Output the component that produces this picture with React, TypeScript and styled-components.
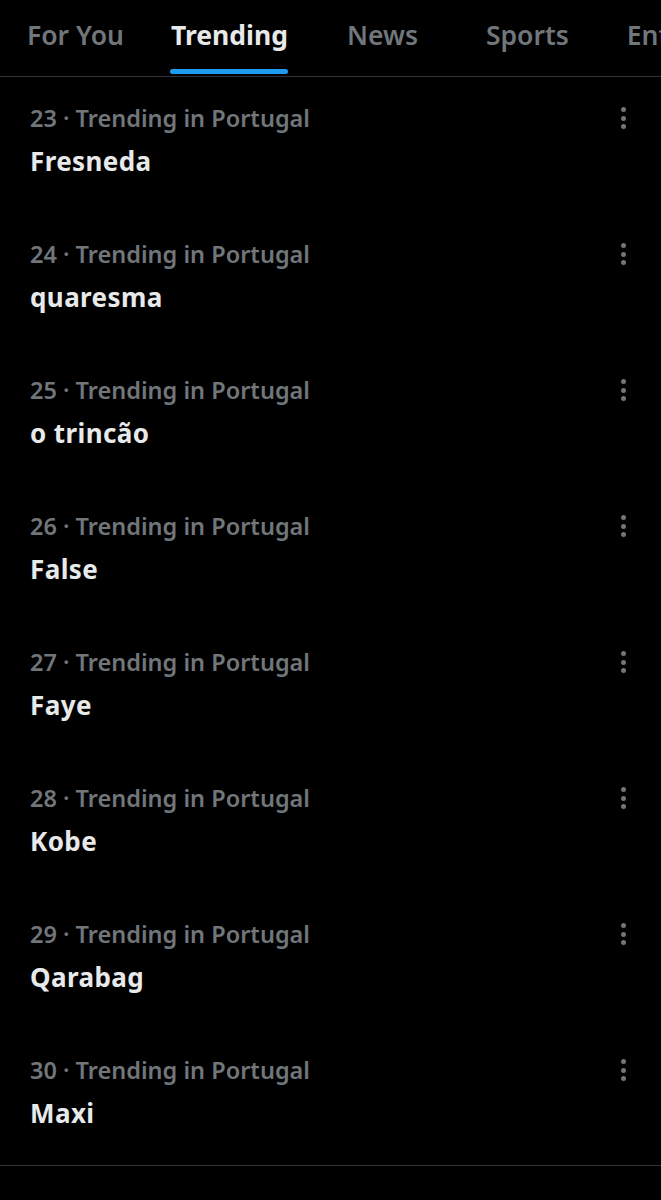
import React from 'react';
import styled, { createGlobalStyle } from 'styled-components';

const Global = createGlobalStyle`
  html, body { margin: 0; padding: 0; background: #000; }
  body { font-family: "Noto Sans", Roboto, "Liberation Sans", sans-serif; }
`;

const Page = styled.div`
  width: 661px;
  min-height: 1200px;
  background: #000;
  overflow: hidden;
`;

const TabBar = styled.nav`
  display: flex;
  align-items: stretch;
  height: 76px;
  border-bottom: 1px solid #2f3336;
  padding-left: 27px;
  white-space: nowrap;
`;

const Tab = styled.div<{ $active?: boolean; $gap: number }>`
  position: relative;
  flex: none;
  margin-left: ${p => p.$gap}px;
  display: flex;
  align-items: flex-start;
  padding-top: 17px;
  font-size: 26.5px;
  line-height: 36px;
  font-weight: ${p => (p.$active ? 700 : 600)};
  color: ${p => (p.$active ? '#e7e9ea' : '#71767b')};
`;

const Underline = styled.span`
  position: absolute;
  left: -1px;
  right: 0;
  top: 69px;
  height: 5px;
  border-radius: 3px;
  background: #1d9bf0;
`;

const List = styled.div`
  display: flex;
  flex-direction: column;
  border-bottom: 1px solid #2f3336;
`;

const Row = styled.div`
  height: 136px;
  box-sizing: border-box;
  padding: 27px 0 0 30px;
  display: flex;
  justify-content: space-between;
`;

const Texts = styled.div`
  display: flex;
  flex-direction: column;
  gap: 13px;
`;

const Meta = styled.div`
  font-size: 23.5px;
  line-height: 28px;
  font-weight: 600;
  color: #71767b;
`;

const Title = styled.div`
  font-size: 26px;
  line-height: 32px;
  font-weight: 700;
  letter-spacing: 0.4px;
  color: #e7e9ea;
`;

const More = styled.div`
  width: 6px;
  margin: 3px 34px 0 0;
  display: flex;
  flex-direction: column;
  gap: 3.5px;
  align-self: flex-start;
`;

const Dot = styled.span`
  width: 5px;
  height: 5px;
  border-radius: 50%;
  background: #71767b;
`;

const tabs = [
  { label: 'For You', gap: 0 },
  { label: 'Trending', gap: 47, active: true },
  { label: 'News', gap: 59 },
  { label: 'Sports', gap: 68 },
  { label: 'Entertainment', gap: 58 },
];

const trends = [
  { rank: 23, name: 'Fresneda' },
  { rank: 24, name: 'quaresma' },
  { rank: 25, name: 'o trincão' },
  { rank: 26, name: 'False' },
  { rank: 27, name: 'Faye' },
  { rank: 28, name: 'Kobe' },
  { rank: 29, name: 'Qarabag' },
  { rank: 30, name: 'Maxi' },
];

export default function App() {
  return (
    <Page>
      <Global />
      <TabBar>
        {tabs.map(t => (
          <Tab key={t.label} $active={t.active} $gap={t.gap}>
            {t.label}
            {t.active && <Underline />}
          </Tab>
        ))}
      </TabBar>
      <List>
        {trends.map(t => (
          <Row key={t.rank}>
            <Texts>
              <Meta>{t.rank} · Trending in Portugal</Meta>
              <Title>{t.name}</Title>
            </Texts>
            <More>
              <Dot />
              <Dot />
              <Dot />
            </More>
          </Row>
        ))}
      </List>
    </Page>
  );
}
